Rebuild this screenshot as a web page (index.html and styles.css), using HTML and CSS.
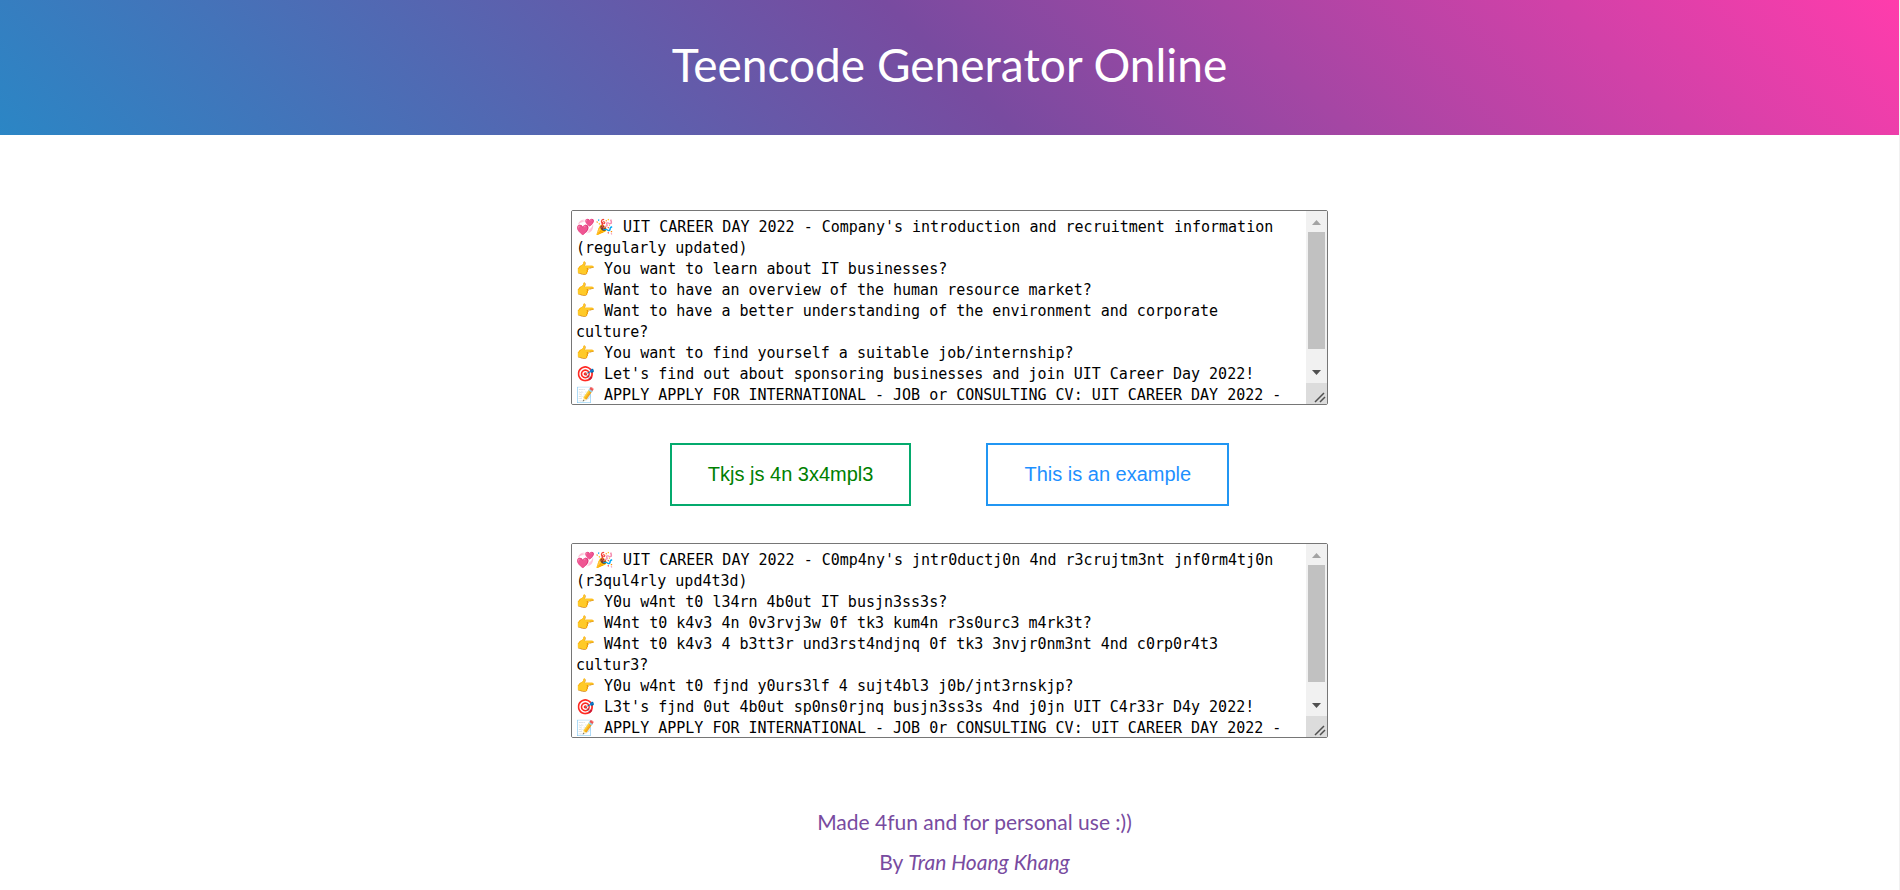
FILE: index.html
```html
<!DOCTYPE html>
<html lang="en">
<head>
<meta charset="utf-8">
<title>Teencode Generator Online</title>
<link rel="stylesheet" href="styles.css">
</head>
<body>
<svg class="defs" aria-hidden="true">
  <symbol id="arrow-up" viewBox="0 0 21 21"><path d="M6 14h9l-4.500-5z"/></symbol>
  <symbol id="arrow-down" viewBox="0 0 21 21"><path d="M6 8h9l-4.500 5z"/></symbol>
  <symbol id="grip" viewBox="0 0 21 21"><path d="M9 19l9-9M14 19l5-5" fill="none" stroke="#505050" stroke-width="1.500"/></symbol>
</svg>
<header class="header">
  <h1 class="title">Teencode Generator Online</h1>
</header>
<main class="converter">
  <div class="field">
    <textarea class="box" aria-label="Text" spellcheck="false">💞🎉 UIT CAREER DAY 2022 - Company's introduction and recruitment information (regularly updated)
👉 You want to learn about IT businesses?
👉 Want to have an overview of the human resource market?
👉 Want to have a better understanding of the environment and corporate culture?
👉 You want to find yourself a suitable job/internship?
🎯 Let's find out about sponsoring businesses and join UIT Career Day 2022!
📝 APPLY APPLY FOR INTERNATIONAL - JOB or CONSULTING CV: UIT CAREER DAY 2022 -</textarea>
    <div class="scrollbar" aria-hidden="true">
      <svg class="step step-up"><use href="#arrow-up"/></svg>
      <div class="track"><div class="thumb"></div></div>
      <svg class="step"><use href="#arrow-down"/></svg>
      <svg class="corner"><use href="#grip"/></svg>
    </div>
  </div>
  <div class="actions">
    <button class="button button-encode" type="button">Tkjs js 4n 3x4mpl3</button>
    <button class="button button-decode" type="button">This is an example</button>
  </div>
  <div class="field">
    <textarea class="box" aria-label="Teencode" spellcheck="false">💞🎉 UIT CAREER DAY 2022 - C0mp4ny's jntr0ductj0n 4nd r3crujtm3nt jnf0rm4tj0n (r3qul4rly upd4t3d)
👉 Y0u w4nt t0 l34rn 4b0ut IT busjn3ss3s?
👉 W4nt t0 k4v3 4n 0v3rvj3w 0f tk3 kum4n r3s0urc3 m4rk3t?
👉 W4nt t0 k4v3 4 b3tt3r und3rst4ndjnq 0f tk3 3nvjr0nm3nt 4nd c0rp0r4t3 cultur3?
👉 Y0u w4nt t0 fjnd y0urs3lf 4 sujt4bl3 j0b/jnt3rnskjp?
🎯 L3t's fjnd 0ut 4b0ut sp0ns0rjnq busjn3ss3s 4nd j0jn UIT C4r33r D4y 2022!
📝 APPLY APPLY FOR INTERNATIONAL - JOB 0r CONSULTING CV: UIT CAREER DAY 2022 -</textarea>
    <div class="scrollbar" aria-hidden="true">
      <svg class="step step-up"><use href="#arrow-up"/></svg>
      <div class="track"><div class="thumb"></div></div>
      <svg class="step"><use href="#arrow-down"/></svg>
      <svg class="corner"><use href="#grip"/></svg>
    </div>
  </div>
</main>
<footer class="footer">
  <p class="note">Made 4fun and for personal use :))</p>
  <p class="note">By <em>Tran Hoang Khang</em></p>
</footer>
</body>
</html>
```
FILE: styles.css
```css
* { box-sizing: border-box; }
body {
  margin: 0;
  min-height: 100vh;
  border-right: 1px solid #f1f1f1;
  background: #fff;
  font-family: Lato, sans-serif;
}
.defs { display: none; }
.header {
  padding: 35px 20px 40px;
  background: linear-gradient(225deg, #ff3cac 0%, #784ba0 50%, #2b86c5 100%);
}
.title {
  margin: 0;
  color: #fff;
  font-size: 46px;
  font-weight: 400;
  line-height: 60px;
  text-align: center;
}
.converter {
  display: flex;
  flex-direction: column;
  align-items: center;
  gap: 37px;
  padding: 75px 20px 0;
}
.field {
  display: flex;
  position: relative;
  max-width: 100%;
}
.box {
  width: 757px;
  max-width: 100%;
  height: 195px;
  padding: 6px 36px 0 4px;
  border: 1px solid #767676;
  border-radius: 2px;
  outline: 0;
  background: #fff;
  color: #000;
  font-family: "DejaVu Sans Mono", monospace;
  font-size: 15px;
  line-height: 21px;
  overflow-y: scroll;
  resize: both;
}
.scrollbar {
  position: absolute;
  top: 1px;
  right: 1px;
  bottom: 1px;
  display: flex;
  flex-direction: column;
  width: 21px;
  background: #f1f1f1;
  pointer-events: none;
}
.step,
.corner {
  flex: none;
  width: 21px;
  height: 21px;
}
.step { fill: #505050; }
.step-up { fill: #a3a3a3; }
.corner { background: #dcdcdc; }
.track {
  flex: 1;
  padding: 0 2px;
}
.thumb {
  height: 90%;
  background: #c1c1c1;
}
.actions {
  display: flex;
  flex-wrap: wrap;
  justify-content: center;
  gap: 75px;
  padding-top: 1px;
}
.button {
  padding: 18px 36px;
  border: 2px solid;
  background: #fff;
  font-family: "Liberation Sans", Arial, sans-serif;
  font-size: 20px;
  line-height: 23px;
  cursor: pointer;
}
.button-encode { border-color: #04aa6d; color: green; }
.button-decode { border-color: #2196f3; color: dodgerblue; }
.footer {
  padding: 64px 20px 0 70px;
  color: #784ba0;
  font-size: 21px;
  line-height: 40px;
  text-align: center;
}
.note { margin: 0; }
```
